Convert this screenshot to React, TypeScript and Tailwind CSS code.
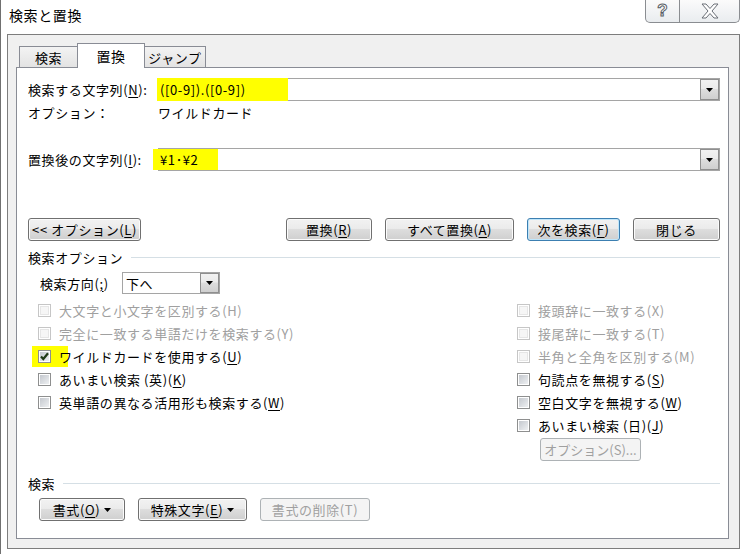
import React from "react";

type Kids = { children?: React.ReactNode };

const U = ({ children }: Kids) => (
  <span className="underline decoration-1 underline-offset-[2px]">{children}</span>
);

function Btn({
  children,
  className = "",
  focus = false,
  disabled = false,
}: Kids & { className?: string; focus?: boolean; disabled?: boolean }) {
  const look = disabled
    ? "border-[#adb2b5] bg-[#f4f4f4] text-[#a0a0a0]"
    : focus
      ? "border-[#3c7fb1] bg-[linear-gradient(#f2f2f2,#ebebeb_45%,#dddddd_50%,#cfcfcf)] shadow-[inset_0_0_0_1px_#bfe6fb]"
      : "border-[#707070] bg-[linear-gradient(#f2f2f2,#ebebeb_45%,#dddddd_50%,#cfcfcf)] shadow-[inset_0_0_0_1px_#fbfbfb]";
  return (
    <div
      className={`flex h-[23px] items-center justify-center whitespace-nowrap rounded-[3px] border ${look} ${className}`}
    >
      {children}
    </div>
  );
}

const Tri = () => (
  <svg width="7" height="4" viewBox="0 0 7 4" className="ml-[4px]">
    <path d="M0 0h7L3.5 4z" fill="#000" />
  </svg>
);

function DropArrow() {
  return (
    <div className="flex h-full w-[19px] shrink-0 items-center justify-center border border-[#8f8f8f] bg-[linear-gradient(#f2f2f2,#ebebeb_45%,#dddddd_50%,#cfcfcf)]">
      <svg width="7" height="4" viewBox="0 0 7 4">
        <path d="M0 0h7L3.5 4z" fill="#000" />
      </svg>
    </div>
  );
}

function Box({ checked = false, disabled = false }: { checked?: boolean; disabled?: boolean }) {
  if (disabled)
    return (
      <span className="flex h-[13px] w-[13px] shrink-0 items-center justify-center border border-[#c6c6c6] bg-white">
        <span className="h-[9px] w-[9px] border border-[#e6e6e6] bg-[#f6f6f6]" />
      </span>
    );
  return (
    <span className="relative flex h-[13px] w-[13px] shrink-0 items-center justify-center border border-[#8e8f8f] bg-white">
      <span className="h-[9px] w-[9px] bg-[linear-gradient(135deg,#c4c8ce,#eef0f2)]" />
      {checked && (
        <svg width="13" height="13" viewBox="0 0 13 13" className="absolute left-[-1px] top-[-1px]">
          <path d="M3 6.5L5.3 9L10 3.2" stroke="#1f3a16" strokeWidth="2.2" fill="none" />
        </svg>
      )}
    </span>
  );
}

function CheckRow({
  label,
  disabled = false,
  checked = false,
  mark = false,
}: {
  label: React.ReactNode;
  disabled?: boolean;
  checked?: boolean;
  mark?: boolean;
}) {
  return (
    <div className="flex h-[23px] items-center">
      {mark ? (
        <span className="-ml-[6px] -mr-[17px] flex h-[21px] items-center bg-[#ffff00] pl-[6px] pr-[17px]">
          <Box checked={checked} />
        </span>
      ) : (
        <Box checked={checked} disabled={disabled} />
      )}
      <span className={`ml-[8px] whitespace-nowrap ${disabled ? "text-[#a0a0a0]" : "text-black"}`}>{label}</span>
    </div>
  );
}

function Heading({ children }: Kids) {
  return (
    <div className="flex h-[16px] items-center">
      <span className="whitespace-nowrap">{children}</span>
      <div className="ml-[8px] h-px flex-1 bg-[#d5dfe5]" />
    </div>
  );
}

export default function App() {
  return (
    <div className="flex h-[554px] w-[745px] flex-col overflow-hidden border-l border-[#707070] bg-white font-['Noto_Sans_CJK_JP','Liberation_Sans',sans-serif] text-[13px] leading-none tracking-[0.6px] text-black">
      {/* caption */}
      <div className="flex h-[34px] shrink-0 justify-between">
        <div className="pl-[8px] pt-[8px] text-[14px]">検索と置換</div>
        <div className="mr-[5px] flex h-[23px] rounded-b-[5px] border border-t-0 border-[#8a8d91] bg-[linear-gradient(#fbfbfb,#e9ecef)]">
          <div className="flex w-[34px] items-center justify-center border-r border-[#8a8d91]">
            <span className="font-['Liberation_Sans',sans-serif] text-[17px] font-bold leading-[20px] tracking-normal text-white [-webkit-text-stroke:1px_#5a5f66]">
              ?
            </span>
          </div>
          <div className="flex w-[59px] items-center justify-center">
            <svg width="20" height="16" viewBox="0 0 20 16">
              <path
                d="M2 1h4l4 4.5L14 1h4l-6 7 6 7h-4l-4-4.5L6 15H2l6-7z"
                fill="#fff"
                stroke="#6a6f76"
                strokeWidth="1"
                strokeLinejoin="round"
              />
            </svg>
          </div>
        </div>
      </div>

      {/* client frame */}
      <div className="ml-[6px] flex h-[515px] w-[733px] flex-col border border-[#7d7d7d] bg-[#f0f0f0] pl-[8px] pt-[8px]">
        {/* tabs */}
        <div className="flex h-[24px] items-end pl-[3px]">
          <div className="flex h-[21px] w-[59px] items-center justify-center border border-b-0 border-[#898c95] bg-[linear-gradient(#f3f3f3,#e3e3e3)]">
            検索
          </div>
          <div className="relative z-10 -mb-px -ml-px flex h-[25px] w-[68px] items-center justify-center border border-b-0 border-[#898c95] bg-white text-[14px]">
            置換
          </div>
          <div className="-ml-px flex h-[21px] w-[62px] items-center justify-center border border-b-0 border-[#898c95] bg-[linear-gradient(#f3f3f3,#e3e3e3)]">
            ジャンプ
          </div>
        </div>

        {/* panel */}
        <div className="flex h-[472px] w-[713px] flex-col border border-[#898c95] bg-white pl-[11px] pr-[8px]">
          <div className="mt-[10px] flex h-[23px] items-center">
            <div className="w-[130px] whitespace-nowrap">
              検索する文字列(<U>N</U>):
            </div>
            <div className="flex h-[23px] flex-1 items-center border border-[#a5a5a5] bg-white">
              <span className="-ml-[2px] -my-px flex h-[23px] w-[131px] items-center bg-[#ffff00] pl-[3px]">
                ([0-9]).([0-9])
              </span>
              <div className="flex-1" />
              <DropArrow />
            </div>
          </div>
          <div className="flex h-[22px] items-center">
            <div className="w-[130px]">オプション：</div>
            <div>ワイルドカード</div>
          </div>

          <div className="mt-[25px] flex h-[23px] items-center">
            <div className="w-[130px] whitespace-nowrap">
              置換後の文字列(<U>I</U>):
            </div>
            <div className="flex h-[23px] flex-1 items-center border border-[#a5a5a5] bg-white">
              <span className="-ml-[6px] flex h-[21px] w-[65px] items-center bg-[#ffff00] pl-[7px]">¥1･¥2</span>
              <div className="flex-1" />
              <DropArrow />
            </div>
          </div>

          {/* button row */}
          <div className="mt-[47px] flex items-center justify-between">
            <Btn className="w-[113px]">
              &lt;&lt; オプション(<U>L</U>)
            </Btn>
            <div className="flex gap-[13px]">
              <Btn className="w-[86px]">
                置換(<U>R</U>)
              </Btn>
              <Btn className="w-[129px]">
                すべて置換(<U>A</U>)
              </Btn>
              <Btn className="w-[93px]" focus>
                次を検索(<U>F</U>)
              </Btn>
              <Btn className="w-[87px]">閉じる</Btn>
            </div>
          </div>

          <div className="mt-[8px]">
            <Heading>検索オプション</Heading>
          </div>

          <div className="mt-[7px] flex h-[22px] items-center pl-[12px]">
            <div className="w-[82px] whitespace-nowrap">
              検索方向(<U>;</U>)
            </div>
            <div className="flex h-[22px] w-[98px] items-center border border-[#a5a5a5] bg-white">
              <span className="flex-1 pl-[3px]">下へ</span>
              <DropArrow />
            </div>
          </div>

          {/* options */}
          <div className="mt-[5px] flex">
            <div className="w-[489px] pl-[10px]">
              <CheckRow disabled label="大文字と小文字を区別する(H)" />
              <CheckRow disabled label="完全に一致する単語だけを検索する(Y)" />
              <CheckRow
                checked
                mark
                label={
                  <>
                    ワイルドカードを使用する(<U>U</U>)
                  </>
                }
              />
              <CheckRow
                label={
                  <>
                    あいまい検索 (英)(<U>K</U>)
                  </>
                }
              />
              <CheckRow
                label={
                  <>
                    英単語の異なる活用形も検索する(<U>W</U>)
                  </>
                }
              />
            </div>
            <div className="flex flex-col">
              <CheckRow disabled label="接頭辞に一致する(X)" />
              <CheckRow disabled label="接尾辞に一致する(T)" />
              <CheckRow disabled label="半角と全角を区別する(M)" />
              <CheckRow
                label={
                  <>
                    句読点を無視する(<U>S</U>)
                  </>
                }
              />
              <CheckRow
                label={
                  <>
                    空白文字を無視する(<U>W</U>)
                  </>
                }
              />
              <CheckRow
                label={
                  <>
                    あいまい検索 (日)(<U>J</U>)
                  </>
                }
              />
              <div className="ml-[23px] mt-[1px]">
                <Btn disabled className="w-[101px] tracking-normal">
                  オプション(S)...
                </Btn>
              </div>
            </div>
          </div>

          <div className="mt-[14px]">
            <Heading>検索</Heading>
          </div>

          <div className="mt-[7px] flex gap-[13px] pl-[11px]">
            <Btn className="w-[86px]">
              書式(<U>O</U>)
              <Tri />
            </Btn>
            <Btn className="w-[109px]">
              特殊文字(<U>E</U>)
              <Tri />
            </Btn>
            <Btn disabled className="w-[110px]">
              書式の削除(T)
            </Btn>
          </div>
        </div>
      </div>
    </div>
  );
}
